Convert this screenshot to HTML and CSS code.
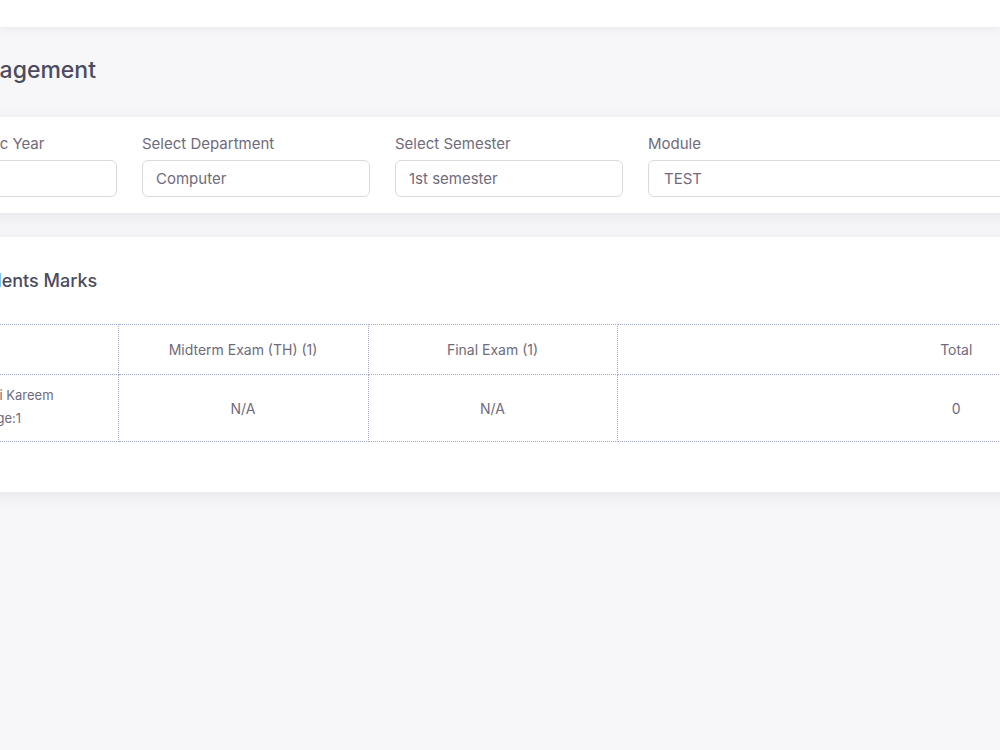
FILE: index.html
```html
<!DOCTYPE html>
<html lang="en">
<head>
<meta charset="utf-8">
<title>Marks Management</title>
<link rel="stylesheet" href="styles.css">
</head>
<body>
<div class="topbar"></div>
<main class="page">
  <h1 class="page-title">Marks Management</h1>

  <section class="card filters">
    <div class="field">
      <label class="field-label">Select Academic Year</label>
      <div class="input">2023-2024</div>
    </div>
    <div class="field">
      <label class="field-label">Select Department</label>
      <div class="input">Computer</div>
    </div>
    <div class="field">
      <label class="field-label">Select Semester</label>
      <div class="input">1st semester</div>
    </div>
    <div class="field field-wide">
      <label class="field-label">Module</label>
      <div class="input input-module">TEST</div>
    </div>
  </section>

  <section class="card marks">
    <h2 class="card-title">Students Marks</h2>
    <table class="marks-table">
      <thead>
        <tr>
          <th class="col-student">Student</th>
          <th class="col-exam">Midterm Exam (TH) (1)</th>
          <th class="col-exam2">Final Exam (1)</th>
          <th class="col-total">Total</th>
        </tr>
      </thead>
      <tbody>
        <tr>
          <td class="student">
            <div class="student-name">Name: Ali Kareem</div>
            <div class="student-stage">Stage:1</div>
          </td>
          <td>N/A</td>
          <td>N/A</td>
          <td>0</td>
        </tr>
      </tbody>
    </table>
  </section>
</main>
</body>
</html>
```

FILE: styles.css
```css
* { box-sizing: border-box; }

html, body {
  margin: 0;
  padding: 0;
  overflow: hidden;
}

body {
  background: #f7f7f9;
  font-family: "Inter", "Noto Sans", sans-serif;
  color: #6f6b7d;
  width: 1000px;
  height: 750px;
}

.topbar {
  height: 27px;
  background: #ffffff;
  box-shadow: 0 2px 8px rgba(75, 70, 92, 0.08);
}

.page {
  margin-left: -135px;
  width: 1430px;
}

.page-title {
  margin: 0;
  padding-top: 27px;
  padding-left: 12px;
  height: 90px;
  font-size: 23px;
  line-height: 32px;
  font-weight: 500;
  color: #4b4b5f;
}

.card {
  background: #ffffff;
  border-radius: 6px;
  box-shadow: 0 4px 16px rgba(75, 70, 92, 0.09);
}

.filters {
  display: flex;
  gap: 25px;
  padding: 16px 24px;
}

.field {
  width: 228px;
  display: flex;
  flex-direction: column;
}

.field-wide {
  flex: 1;
}

.field-label {
  font-size: 15px;
  line-height: 21px;
  color: #6f6b7d;
  margin-bottom: 6px;
}

.input {
  height: 37px;
  border: 1px solid #dbdade;
  border-radius: 6px;
  padding: 0 13px;
  font-size: 15px;
  line-height: 35px;
  color: #6f6b7d;
}

.input-module {
  padding-left: 15px;
}

.marks {
  margin-top: 24px;
  padding: 32px 0 50px;
}

.card-title {
  margin: 0 0 31px;
  padding-left: 97px;
  font-size: 18px;
  line-height: 24px;
  font-weight: 500;
  color: #4b4b5f;
}

.marks-table {
  border-collapse: collapse;
  width: 1430px;
  table-layout: fixed;
}

.marks-table th,
.marks-table td {
  border: 1px dotted #a3a8c9;
  text-align: center;
  font-weight: 400;
  color: #6f6b7d;
}

.marks-table th {
  height: 50px;
  font-size: 14px;
  padding-bottom: 2px;
}

.marks-table td {
  height: 67px;
  font-size: 14px;
}

.marks-table tr > :first-child { border-left: none; }
.marks-table tr > :last-child { border-right: none; }

.marks-table th.col-student {
  text-align: left;
  padding-left: 20px;
}

.col-student { width: 253px; }
.col-exam { width: 250px; }
.col-exam2 { width: 249px; }
.col-total { width: 678px; }

.marks-table td.student {
  font-size: 13px;
  line-height: 23px;
  padding-left: 16px;
  padding-bottom: 4px;
}
```
